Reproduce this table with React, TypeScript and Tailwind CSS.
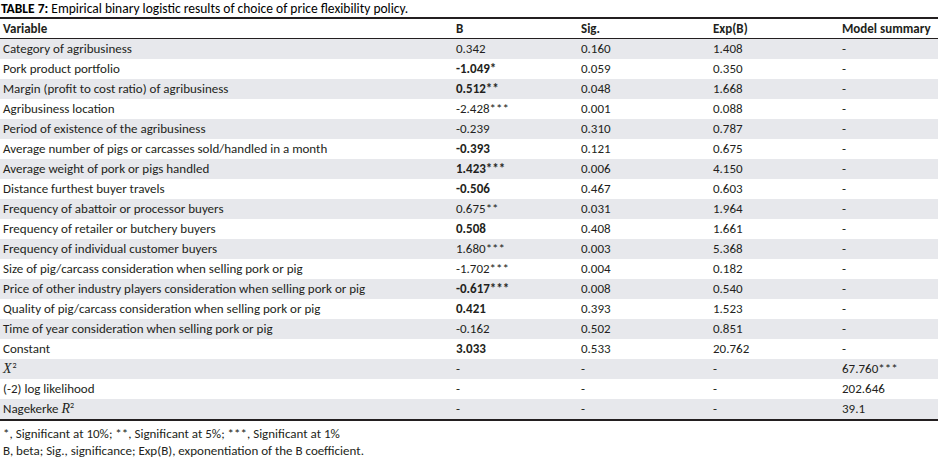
import React from "react";

type Row = { v: React.ReactNode; b: string; bb?: boolean; s: string; e: string; m: string };

const rows: Row[] = [
  { v: "Category of agribusiness", b: "0.342", s: "0.160", e: "1.408", m: "-" },
  { v: "Pork product portfolio", b: "-1.049*", bb: true, s: "0.059", e: "0.350", m: "-" },
  { v: "Margin (profit to cost ratio) of agribusiness", b: "0.512**", bb: true, s: "0.048", e: "1.668", m: "-" },
  { v: "Agribusiness location", b: "-2.428***", s: "0.001", e: "0.088", m: "-" },
  { v: "Period of existence of the agribusiness", b: "-0.239", s: "0.310", e: "0.787", m: "-" },
  { v: "Average number of pigs or carcasses sold/handled in a month", b: "-0.393", bb: true, s: "0.121", e: "0.675", m: "-" },
  { v: "Average weight of pork or pigs handled", b: "1.423***", bb: true, s: "0.006", e: "4.150", m: "-" },
  { v: "Distance furthest buyer travels", b: "-0.506", bb: true, s: "0.467", e: "0.603", m: "-" },
  { v: "Frequency of abattoir or processor buyers", b: "0.675**", s: "0.031", e: "1.964", m: "-" },
  { v: "Frequency of retailer or butchery buyers", b: "0.508", bb: true, s: "0.408", e: "1.661", m: "-" },
  { v: "Frequency of individual customer buyers", b: "1.680***", s: "0.003", e: "5.368", m: "-" },
  { v: "Size of pig/carcass consideration when selling pork or pig", b: "-1.702***", s: "0.004", e: "0.182", m: "-" },
  { v: "Price of other industry players consideration when selling pork or pig", b: "-0.617***", bb: true, s: "0.008", e: "0.540", m: "-" },
  { v: "Quality of pig/carcass consideration when selling pork or pig", b: "0.421", bb: true, s: "0.393", e: "1.523", m: "-" },
  { v: "Time of year consideration when selling pork or pig", b: "-0.162", s: "0.502", e: "0.851", m: "-" },
  { v: "Constant", b: "3.033", bb: true, s: "0.533", e: "20.762", m: "-" },
  {
    v: (
      <span>
        <span className="italic font-['Liberation_Serif',serif] text-[14px]">X</span>
        <span className="text-[8px] relative top-[-5px] ml-[1px]">2</span>
      </span>
    ),
    b: "-",
    s: "-",
    e: "-",
    m: "67.760***",
  },
  { v: "(-2) log likelihood", b: "-", s: "-", e: "-", m: "202.646" },
  {
    v: (
      <span>
        Nagekerke <span className="italic font-['Liberation_Serif',serif] text-[14px]">R</span>
        <span className="text-[8px] relative top-[-5px]">2</span>
      </span>
    ),
    b: "-",
    s: "-",
    e: "-",
    m: "39.1",
  },
];

const grid = "grid grid-cols-[453px_125px_132px_129px_99px]";

export default function App() {
  return (
    <div className="w-[947px] h-[459px] bg-white text-[#231f20] font-['Carlito','Lato',sans-serif] overflow-hidden">
      <div className="h-[17px] text-[13.5px] leading-[17px] pl-[1px] text-black whitespace-nowrap">
        <span className="font-bold">TABLE 7:</span> Empirical binary logistic results of choice of price flexibility policy.
      </div>
      <div className="w-[938px] border-t-2 border-[#231f20]">
        <div className={`${grid} h-[20px] items-center text-[13px] leading-[16px] font-bold border-b border-[#231f20]`}>
          <div className="pl-[3px]">Variable</div>
          <div className="pl-[3px]">B</div>
          <div className="pl-[3px]">Sig.</div>
          <div className="pl-[3px]">Exp(B)</div>
          <div className="pl-[3px]">Model summary</div>
        </div>
        {rows.map((r, i) => (
          <div
            key={i}
            className={`${grid} h-[20px] items-center text-[13px] leading-[16px] ${i % 2 === 0 ? "bg-[#e7e8ec]" : "bg-white"}`}
          >
            <div className="pl-[3px] whitespace-nowrap">{r.v}</div>
            <div className={`pl-[3px] ${r.bb ? "font-bold" : ""}`}>{r.b}</div>
            <div className="pl-[3px]">{r.s}</div>
            <div className="pl-[3px]">{r.e}</div>
            <div className="pl-[3px]">{r.m}</div>
          </div>
        ))}
        <div className="border-t-2 border-[#231f20]" />
      </div>
      <div className="pl-[3px] pt-[4px] text-[13px] leading-[17px] whitespace-nowrap">
        <div>*, Significant at 10%; **, Significant at 5%; ***, Significant at 1%</div>
        <div>B, beta; Sig., significance; Exp(B), exponentiation of the B coefficient.</div>
      </div>
    </div>
  );
}
